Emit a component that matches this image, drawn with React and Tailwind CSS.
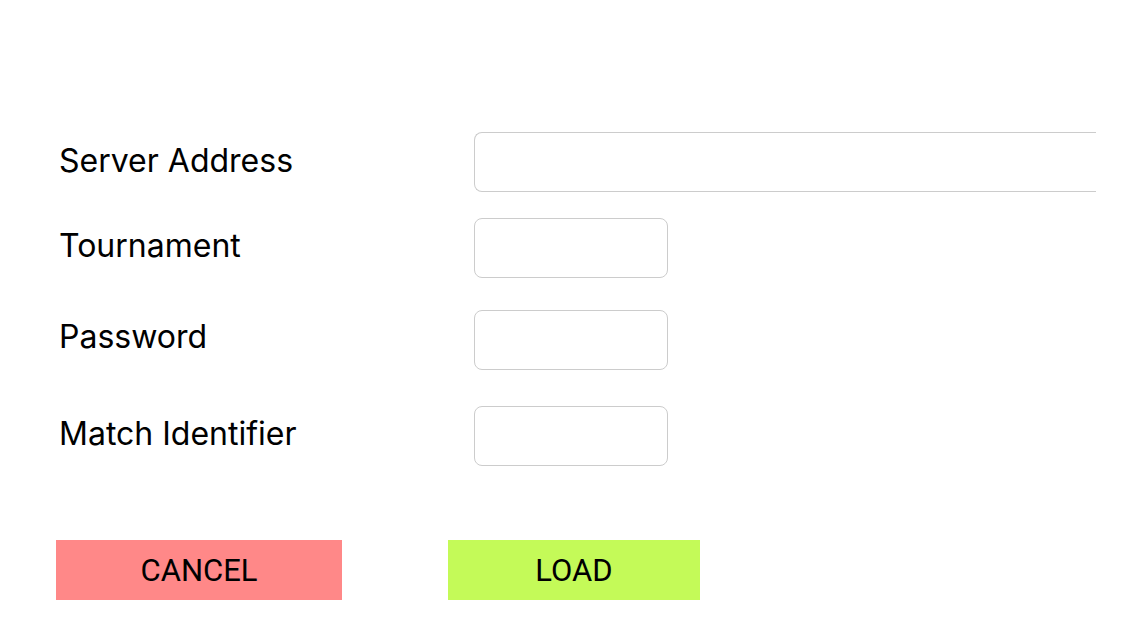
export default function App() {
  const label = "w-[474px] shrink-0 pl-[59px] text-[32px] leading-none text-black";
  const input = "h-[60px] rounded-[8px] border border-[#cccccc] bg-white";
  return (
    <div className="w-[1136px] h-[640px] bg-white overflow-hidden" style={{ fontFamily: "Inter, 'Noto Sans', sans-serif" }}>
      <div className="pt-[132px]">
        <div className="flex items-center h-[60px]">
          <div className={label + " -mt-[3px]"}>Server Address</div>
          <div className="h-[60px] w-[622px] rounded-l-[8px] border border-r-0 border-[#cccccc] bg-white" />
        </div>
        <div className="flex items-center h-[60px] mt-[26px]">
          <div className={label + " -mt-[4px]"}>Tournament</div>
          <div className={input + " w-[194px]"} />
        </div>
        <div className="flex items-center h-[60px] mt-[32px]">
          <div className={label + " -mt-[6px]"}>Password</div>
          <div className={input + " w-[194px]"} />
        </div>
        <div className="flex items-center h-[60px] mt-[36px]">
          <div className={label + " -mt-[5px]"}>Match Identifier</div>
          <div className={input + " w-[194px]"} />
        </div>
      </div>
      <div className="flex mt-[74px] pl-[56px] gap-[106px]" style={{ fontFamily: "Roboto, sans-serif" }}>
        <div className="w-[286px] h-[60px] bg-[#ff8888] flex items-center justify-center text-[31px] text-black pt-[2px]">CANCEL</div>
        <div className="w-[252px] h-[60px] bg-[#c4fa58] flex items-center justify-center text-[31px] text-black pt-[2px]">LOAD</div>
      </div>
    </div>
  );
}
